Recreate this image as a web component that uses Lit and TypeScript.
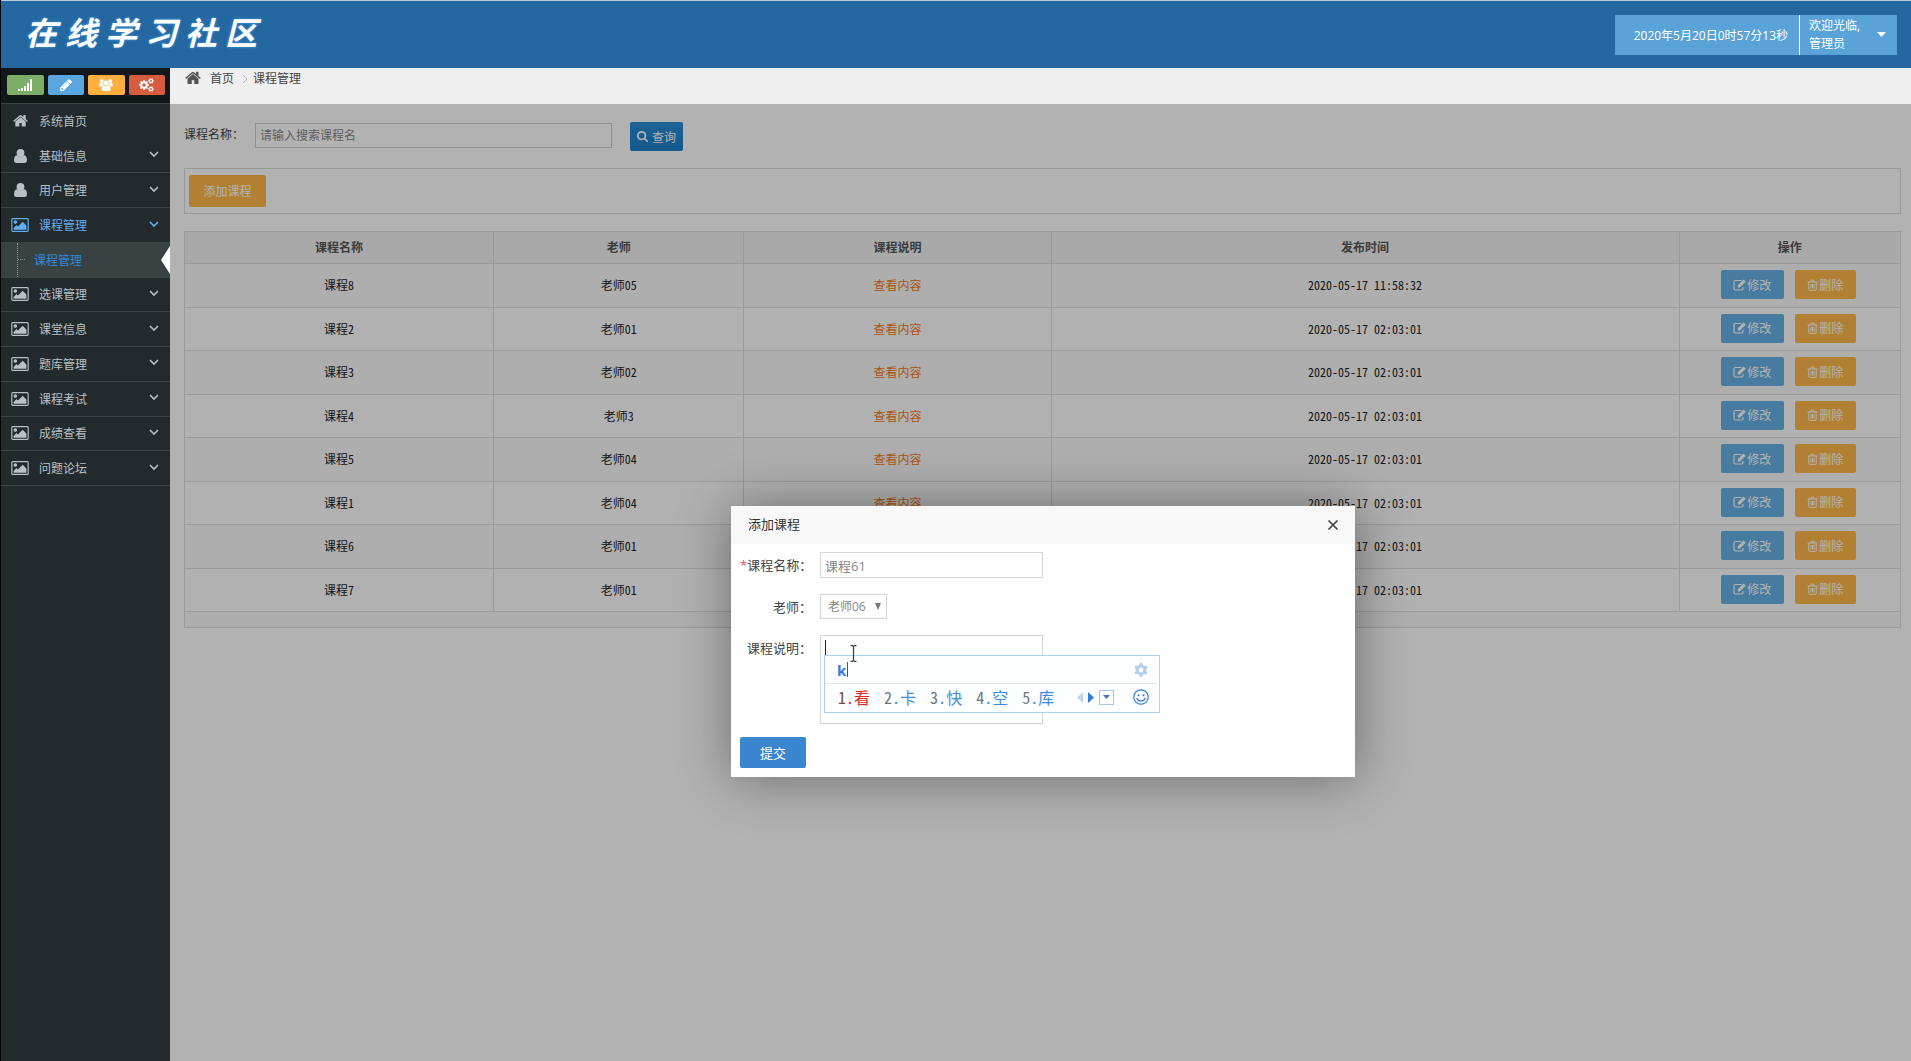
import { LitElement, html, css, svg, nothing } from "lit";
import { customElement, state } from "lit/decorators.js";

type IconName =
  | "home" | "user" | "picture" | "pencil" | "search" | "signal" | "users" | "cogs"
  | "chevron" | "edit" | "trash" | "close" | "gear" | "smile" | "ibeam";

const gearPath = (cx: number, cy: number, r: number, teeth: number, hole = 0.36) => {
  const pts: string[] = [];
  const step = (Math.PI * 2) / teeth;
  for (let i = 0; i < teeth; i++) {
    const a = i * step;
    for (const [off, rad] of [[-0.3, r * 0.76], [-0.17, r], [0.17, r], [0.3, r * 0.76]]) {
      pts.push(`${(cx + Math.cos(a + off * step) * rad).toFixed(2)} ${(cy + Math.sin(a + off * step) * rad).toFixed(2)}`);
    }
  }
  const h = r * hole;
  return `M${pts.join("L")}ZM${cx - h} ${cy}a${h} ${h} 0 1 0 ${h * 2} 0a${h} ${h} 0 1 0 ${-h * 2} 0Z`;
};

const ICONS: Record<IconName, { box: string; body: unknown }> = {
  home: {
    box: "64 192 1664 1344",
    body: svg`<path d="M1472 992v480q0 26-19 45t-45 19h-384v-384h-256v384h-384q-26 0-45-19t-19-45v-480q0-1 .5-3t.5-3l575-474 575 474q1 2 1 6zm223-69l-62 74q-8 9-21 11h-3q-13 0-21-7l-692-577-692 577q-12 8-24 7-13-2-21-11l-62-74q-8-10-7-23.500t11-21.500l719-599q32-26 76-26t76 26l244 204v-195q0-14 9-23t23-9h192q14 0 23 9t9 23v408l219 182q10 8 11 21.500t-7 23.500z"/>`,
  },
  user: {
    box: "0 0 13 14",
    body: svg`<circle cx="6.500" cy="4" r="3.900"/><path d="M2.800 6.300Q6.500 9 10.200 6.300 13 6.800 13 11.600 13 14 10.800 14H2.200Q0 14 0 11.600 0 6.800 2.800 6.300z"/>`,
  },
  picture: {
    box: "-64 128 1920 1536",
    body: svg`<path d="M576 576q0 80-56 136t-136 56-136-56-56-136 56-136 136-56 136 56 56 136zm1024 384v448h-1408v-192l320-320 160 160 512-512zm96-704h-1600q-13 0-22.500 9.500t-9.500 22.500v1216q0 13 9.500 22.500t22.500 9.500h1600q13 0 22.500-9.500t9.500-22.500v-1216q0-13-9.500-22.500t-22.500-9.500zm160 32v1216q0 66-47 113t-113 47h-1600q-66 0-113-47t-47-113v-1216q0-66 47-113t113-47h1600q66 0 113 47t47 113z"/>`,
  },
  pencil: {
    box: "128 128 1536 1536",
    body: svg`<path d="M491 1536l91-91-235-235-91 91v107h128v128h107zm523-928q0-22-22-22-10 0-17 7l-542 542q-7 7-7 17 0 22 22 22 10 0 17-7l542-542q7-7 7-17zm-54-192l416 416-832 832h-416v-416zm683 96q0 53-37 90l-166 166-416-416 166-165q36-38 90-38 53 0 91 38l235 234q37 39 37 91z"/>`,
  },
  search: {
    box: "64 128 1664 1664",
    body: svg`<path d="M1216 832q0-185-131.500-316.500t-316.500-131.500-316.500 131.500-131.500 316.500 131.500 316.500 316.500 131.500 316.500-131.500 131.500-316.500zm512 832q0 52-38 90t-90 38q-54 0-90-38l-343-342q-179 124-399 124-143 0-273.500-55.500t-225-150-150-225-55.500-273.500 55.500-273.500 150-225 225-150 273.500-55.500 273.500 55.500 225 150 150 225 55.500 273.500q0 220-124 399l343 343q37 37 37 90z"/>`,
  },
  signal: {
    box: "0 0 14 12",
    body: svg`<path d="M0 10h2v2H0zM3 9h2v3H3zM6 7h2v5H6zM9 4h2v8H9zM12 0h2v12h-2z"/>`,
  },
  users: {
    box: "0 0 14 12",
    body: svg`<circle cx="2.800" cy="2" r="1.900"/><circle cx="11.200" cy="2" r="1.900"/><circle cx="7" cy="4" r="2.600"/><path d="M0 6.600q0-2.500 1.400-2.500h2.200q.2 1.600 1 2.300-1.200.1-2 1.100H1Q0 7.400 0 6.600zM14 6.600q0-2.500-1.400-2.500h-2.200q-.2 1.600-1 2.300 1.200.1 2 1.100H13q1-.1 1-.9zM2.500 10.500q0-3.900 2.300-3.900 2.200 1.600 4.400 0 2.300 0 2.300 3.900 0 1.500-1.500 1.500H4q-1.500 0-1.500-1.500z"/>`,
  },
  cogs: {
    box: "0 0 15 14",
    body: svg`<path fill-rule="evenodd" d="${gearPath(5, 7, 5, 8)}"/><path fill-rule="evenodd" d="${gearPath(12, 3, 2.8, 6)}"/><path fill-rule="evenodd" d="${gearPath(12, 11, 2.8, 6)}"/>`,
  },
  chevron: {
    box: "0 0 10 7",
    body: svg`<path d="M1 1l4 4 4-4" fill="none" stroke="currentColor" stroke-width="1.600"/>`,
  },
  edit: {
    box: "0 0 13 12",
    body: svg`<path d="M8.500 1.500H2.500Q1 1.500 1 3v6.500Q1 11 2.500 11H8.500Q10 11 10 9.500V8" fill="none" stroke="currentColor" stroke-width="1.200"/><path d="M4.800 8.500V6.200L10.600.6 12.800 2.800 7 8.500z"/>`,
  },
  trash: {
    box: "0 0 11 12",
    body: svg`<path d="M.5 3h10M3.500 3l.7-1.900h2.600L7.500 3M1.800 3v7.300q0 1.100 1 1.100h5.400q1 0 1-1.100V3M4 5v4.500M5.500 5v4.500M7 5v4.500" fill="none" stroke="currentColor"/>`,
  },
  close: {
    box: "0 0 12 12",
    body: svg`<path d="M1.500 1.500l9 9M10.500 1.500l-9 9" fill="none" stroke="currentColor" stroke-width="1.700"/>`,
  },
  gear: {
    box: "0 0 14 14",
    body: svg`<g transform="rotate(30 7 7)"><path d="${gearPath(7, 7, 7, 6, 0.34)}" fill-rule="evenodd"/></g>`,
  },
  smile: {
    box: "0 0 16 16",
    body: svg`<circle cx="8" cy="8" r="7.200" fill="none" stroke="currentColor" stroke-width="1.200"/><circle cx="5.500" cy="6.200" r="1"/><circle cx="10.500" cy="6.200" r="1"/><path d="M3.800 9q.8 3 4.200 3t4.200-3" fill="none" stroke="currentColor" stroke-width="1.200"/>`,
  },
  ibeam: {
    box: "0 0 7 17",
    body: svg`<path d="M.5.7h2l1 .8 1-.8h2M.5 16.300h2l1-.8 1 .8h2M3.500 1.500v14" fill="none" stroke="currentColor" stroke-width="1.300"/>`,
  },
};

const icon = (name: IconName, cls = "") => html`
  <svg class="icon ${cls || name}" viewBox=${ICONS[name].box} fill="currentColor" aria-hidden="true">${ICONS[name].body}</svg>`;

interface MenuItem { label: string; icon: IconName; plain?: boolean; open?: boolean; child?: boolean }

const MENU: MenuItem[] = [
  { label: "系统首页", icon: "home", plain: true },
  { label: "基础信息", icon: "user" },
  { label: "用户管理", icon: "user" },
  { label: "课程管理", icon: "picture", open: true },
  { label: "课程管理", icon: "picture", child: true },
  { label: "选课管理", icon: "picture" },
  { label: "课堂信息", icon: "picture" },
  { label: "题库管理", icon: "picture" },
  { label: "课程考试", icon: "picture" },
  { label: "成绩查看", icon: "picture" },
  { label: "问题论坛", icon: "picture" },
];

const COURSES: [string, string, string][] = [
  ["课程8", "老师05", "2020-05-17 11:58:32"],
  ["课程2", "老师01", "2020-05-17 02:03:01"],
  ["课程3", "老师02", "2020-05-17 02:03:01"],
  ["课程4", "老师3", "2020-05-17 02:03:01"],
  ["课程5", "老师04", "2020-05-17 02:03:01"],
  ["课程1", "老师04", "2020-05-17 02:03:01"],
  ["课程6", "老师01", "2020-05-17 02:03:01"],
  ["课程7", "老师01", "2020-05-17 02:03:01"],
];

const CANDIDATES = ["看", "卡", "快", "空", "库"];

const base = css`
  * { box-sizing: border-box; }
  button, input, select, textarea { font: inherit; color: inherit; margin: 0; border-radius: 0; }
  button { border: 0; padding: 0; cursor: pointer; }
  a { color: inherit; text-decoration: none; }
  .icon { display: block; flex: none; }
`;

@customElement("side-menu")
class SideMenu extends LitElement {
  static styles = [base, css`
    :host { display: block; background: #222a2d; color: #b9c0c6; }
    .shortcuts { display: flex; gap: 4px; height: 36px; padding: 7px 5px 8px 6px; background: #12181a; border-bottom: 1px solid #3a4346; }
    .shortcut { flex: 1; display: flex; align-items: center; justify-content: center; border-radius: 2px; color: #fff; }
    .green { background: #7cae68; }
    .blue { background: #5aa6de; }
    .orange { background: #ffb03e; }
    .red { background: #d75b3f; }
    .signal, .users { width: 14px; height: 12px; }
    .pencil { width: 12px; height: 12px; }
    .cogs { width: 15px; height: 14px; }
    .menu { display: grid; grid-auto-rows: 1fr; min-height: 382px; margin: 0; padding: 0; list-style: none; }
    .item { border-bottom: 1px solid #3b4447; }
    .item.plain { border-color: transparent; }
    .link { display: flex; align-items: center; height: 100%; padding: 0 11px 0 8px; }
    .slot { display: flex; justify-content: center; width: 22px; margin-right: 8px; }
    .text { flex: 1; }
    .home { width: 15px; height: 13px; }
    .user { width: 13px; height: 14px; }
    .picture { width: 18px; height: 14px; }
    .chevron { width: 10px; height: 7px; margin-bottom: 2px; }
    .open { color: #62aef0; }
    .child { display: flex; align-items: stretch; background: #384243; color: #3189d8; }
    .child .link { flex: 1; padding: 0 0 0 5px; }
    .branch { width: 12px; margin-left: 16px; border-left: 1px dotted #8b979a; display: flex; align-items: center; }
    .branch::before { content: ""; width: 7px; border-top: 1px dotted #8b979a; }
    .pointer { align-self: center; border: 14px solid transparent; border-left: 0; border-right: 9px solid #fff; }
  `];

  render() {
    return html`
      <div class="shortcuts">
        <button class="shortcut green" aria-label="统计">${icon("signal")}</button>
        <button class="shortcut blue" aria-label="编辑">${icon("pencil")}</button>
        <button class="shortcut orange" aria-label="用户">${icon("users")}</button>
        <button class="shortcut red" aria-label="设置">${icon("cogs")}</button>
      </div>
      <ul class="menu">
        ${MENU.map((m) => m.child
          ? html`<li class="item child"><span class="branch"></span><a class="link" href="#">${m.label}</a><span class="pointer"></span></li>`
          : html`<li class="item ${m.open ? "open" : ""} ${m.plain ? "plain" : ""}">
              <a class="link" href="#"><span class="slot">${icon(m.icon)}</span><span class="text">${m.label}</span>${m.plain ? nothing : icon("chevron")}</a>
            </li>`)}
      </ul>`;
  }
}

@customElement("course-list")
class CourseList extends LitElement {
  static styles = [base, css`
    :host { display: block; padding: 18px 10px 0 14px; color: #444; }
    .search { display: flex; align-items: flex-start; height: 29px; margin-bottom: 17px; }
    .label { width: 71px; line-height: 26px; }
    .keyword { width: 357px; height: 25px; margin: 1px 18px 0 0; padding: 0 4px; border: 1px solid #d0d0d0; background: #fff; }
    .keyword::placeholder { color: #888; opacity: 1; }
    .query { display: flex; align-items: center; justify-content: center; gap: 4px; width: 53px; height: 29px; border-radius: 2px; color: #fff; background: linear-gradient(#2a8fd8, #1c7cc8); }
    .search-icon { width: 11px; height: 11px; }
    .bar { padding: 6px 4px; margin-bottom: 17px; border: 1px solid #dcdcdc; }
    .add { display: block; width: 77px; height: 32px; border-radius: 2px; background: #ffb848; color: #fff; }
    .table { width: 100%; table-layout: fixed; border-collapse: collapse; border: 1px solid #ddd; color: #222; font-family: "Noto Sans Mono CJK SC", "Noto Sans CJK SC", monospace; text-align: center; }
    .c1 { width: 18%; } .c2 { width: 14.6%; } .c3 { width: 17.9%; } .c4 { width: 36.6%; } .c5 { width: 12.9%; }
    th { height: 32px; padding: 0 0 2px; background: #f3f3f3; color: #555; border: 1px solid #ddd; font: bold 12px "Open Sans", "Noto Sans CJK SC", sans-serif; }
    td { padding: 0; border: 1px solid #ddd; }
    .row td { height: 44px; padding-bottom: 2px; }
    .row:nth-child(even) td { height: 43px; }
    .row:nth-child(odd) { background: #fafafa; }
    .row:nth-child(even) { background: #fefefe; }
    .foot td { height: 16px; background: #fafafa; }
    .view { color: #f47a20; }
    .actions { display: flex; justify-content: center; gap: 11px; padding-right: 3px; font-family: "Open Sans", "Noto Sans CJK SC", sans-serif; }
    .action { display: flex; align-items: center; justify-content: center; gap: 1px; height: 29px; border-radius: 2px; color: #fff; }
    .modify { width: 63px; background: #66b0e6; }
    .remove { width: 61px; background: #ffb848; }
    .edit { width: 13px; height: 12px; }
    .trash { width: 11px; height: 12px; }
  `];

  render() {
    return html`
      <form class="search" @submit=${(e: Event) => e.preventDefault()}>
        <label class="label" for="keyword">课程名称：</label>
        <input class="keyword" id="keyword" type="text" placeholder="请输入搜索课程名">
        <button class="query">${icon("search", "search-icon")}查询</button>
      </form>
      <div class="bar"><button class="add">添加课程</button></div>
      <table class="table">
        <colgroup><col class="c1"><col class="c2"><col class="c3"><col class="c4"><col class="c5"></colgroup>
        <thead><tr><th>课程名称</th><th>老师</th><th>课程说明</th><th>发布时间</th><th>操作</th></tr></thead>
        <tbody>
          ${COURSES.map(([name, teacher, time]) => html`
            <tr class="row">
              <td>${name}</td><td>${teacher}</td><td><a class="view" href="#">查看内容</a></td><td>${time}</td>
              <td><div class="actions">
                <button class="action modify">${icon("edit")}修改</button>
                <button class="action remove">${icon("trash")}删除</button>
              </div></td>
            </tr>`)}
        </tbody>
        <tfoot><tr class="foot"><td colspan="5"></td></tr></tfoot>
      </table>`;
  }
}

@customElement("course-dialog")
class CourseDialog extends LitElement {
  static styles = [base, css`
    :host { display: block; width: 624px; background: #fff; color: #444; font-size: 13px; box-shadow: 1px 1px 50px rgba(0, 0, 0, 0.4); }
    .head { display: flex; align-items: center; justify-content: space-between; height: 38px; padding: 0 16px 0 17px; background: #f8f8f8; }
    .title { margin: 0 0 3px; font-size: 13px; font-weight: normal; color: #333; }
    .x { background: none; color: #444; }
    .close { width: 12px; height: 12px; }
    .form { display: grid; grid-template-columns: 72px 223px; column-gap: 8px; row-gap: 16px; padding: 8px 9px 9px; }
    .label { height: 25px; text-align: right; line-height: 27px; white-space: nowrap; }
    .star { color: #f04a6a; }
    .control { display: block; width: 100%; height: 26px; padding: 0 4px; border: 1px solid #d5d5d5; background: #fff; color: #858585; outline: 0; }
    .picker { display: grid; width: 67px; height: 25px; align-items: center; }
    .picker > * { grid-area: 1 / 1; }
    .picker .control { height: 25px; padding-left: 7px; appearance: none; font-size: 12px; }
    .arrow { justify-self: end; width: 6px; height: 7px; margin-right: 6px; color: #777; pointer-events: none; }
    .field { position: relative; height: 89px; }
    .area { height: 89px; padding: 4px; resize: none; }
    .caret { position: absolute; left: 5px; top: 5px; width: 1px; height: 15px; background: #222; }
    .ibeam { position: absolute; left: 30px; top: 10px; width: 7px; height: 17px; color: #444; z-index: 2; }
    .submit { grid-column: 1 / -1; width: 66px; height: 31px; margin-top: -3px; border-radius: 2px; background: #3a87cf; color: #fff; }
    .ime { position: absolute; left: 4px; top: 20px; z-index: 1; width: 336px; background: #fdfeff; border: 1px solid #a9d3f5; color: #3579d8; }
    .ime-top { display: flex; align-items: center; height: 28px; margin-right: 2px; padding: 0 9px 0 12px; border-bottom: 1px solid #e3e8ec; }
    .typed { display: flex; align-items: center; gap: 1px; flex: 1; font: bold 15px "Open Sans", sans-serif; line-height: 20px; }
    .typed::after { content: ""; width: 1px; height: 15px; background: #555; }
    .gear { width: 14px; height: 14px; color: #b7cfe6; }
    .ime-list { display: flex; align-items: center; height: 28px; padding: 0 10px 2px 13px; font: 16px "Noto Sans Mono CJK SC", "Noto Sans CJK SC", monospace; line-height: 20px; }
    .cand { margin-right: 14px; color: #3c8ce4; background: none; font: inherit; }
    .num { color: #6b7680; }
    .cand.first { color: #e2281c; }
    .first .num { color: #7a4a40; }
    .pager { display: flex; align-items: center; gap: 5px; margin: 0 auto 0 9px; }
    .tri { width: 6px; height: 11px; }
    .pale { color: #bdd2ea; }
    .more { display: flex; align-items: center; justify-content: center; width: 15px; height: 15px; border: 1px solid #a8c6e8; background: #fff; color: #3c76bd; }
    .down { width: 7px; height: 4px; }
    .smile { width: 16px; height: 16px; }
  `];

  @state() private name = "课程61";

  render() {
    return html`
      <div class="head"><h2 class="title">添加课程</h2><button class="x" aria-label="关闭">${icon("close")}</button></div>
      <form class="form" @submit=${(e: Event) => e.preventDefault()}>
        <label class="label" for="name"><span class="star">*</span>课程名称：</label>
        <input class="control" id="name" type="text" .value=${this.name}>
        <label class="label" for="teacher">老师：</label>
        <div class="picker">
          <select class="control" id="teacher"><option>老师06</option></select>
          <svg class="icon arrow" viewBox="0 0 6 7" fill="currentColor" aria-hidden="true"><path d="M0 0h6L3 7z"/></svg>
        </div>
        <label class="label" for="about">课程说明：</label>
        <div class="field">
          <textarea class="control area" id="about"></textarea>
          <span class="caret"></span>
          ${icon("ibeam")}
          <div class="ime">
            <div class="ime-top"><span class="typed">k</span>${icon("gear")}</div>
            <div class="ime-list">
              ${CANDIDATES.map((c, i) => html`<button type="button" class="cand ${i === 0 ? "first" : ""}"><span class="num">${i + 1}</span>.${c}</button>`)}
              <span class="pager">
                <svg class="icon tri pale" viewBox="0 0 6 11" fill="currentColor"><path d="M6 0v11L0 5.500z"/></svg>
                <svg class="icon tri" viewBox="0 0 6 11" fill="currentColor"><path d="M0 0v11l6-5.500z"/></svg>
                <button type="button" class="more" aria-label="更多"><svg class="icon down" viewBox="0 0 7 4" fill="currentColor"><path d="M0 0h7L3.500 4z"/></svg></button>
              </span>
              ${icon("smile")}
            </div>
          </div>
        </div>
        <button class="submit">提交</button>
      </form>`;
  }
}

@customElement("app-root")
class AppRoot extends LitElement {
  static styles = [base, css`
    :host { display: flex; flex-direction: column; min-height: 100vh; border-left: 1px solid #000; box-sizing: border-box; background: #fff; font: 12px "Open Sans", "Noto Sans CJK SC", sans-serif; }
    .header { display: flex; align-items: center; justify-content: space-between; height: 68px; padding: 0 14px 0 24px; border-top: 1px solid #b9cddd; background: #2467a1; color: #fff; }
    .logo { display: flex; gap: 8px; margin: 0 0 8px; font: italic bold 32px "Noto Sans CJK SC", sans-serif; line-height: 44px; text-shadow: 0 0 3px #4aa0e8; }
    .account { display: flex; height: 40px; background: #5aa3d8; }
    .clock { display: flex; align-items: center; padding: 0 11px 0 19px; border-right: 1px solid #fff; }
    .profile { display: flex; align-items: center; justify-content: space-between; width: 97px; padding: 0 11px 0 9px; background: none; color: #fff; text-align: left; line-height: 18px; }
    .caret { width: 9px; height: 5px; }
    .layout { flex: 1; display: grid; grid-template-columns: 169px 1fr; }
    .main { display: flex; flex-direction: column; }
    .crumbs { display: flex; align-items: flex-start; height: 36px; padding: 0 15px; background: #f0eff0; color: #444; line-height: 21px; }
    .home { width: 16px; height: 13px; margin: 3px 9px 0 0; color: #555; }
    .sep { width: 6px; height: 8px; margin: 7px 5px 0 8px; color: #bbb; }
    .content { flex: 1; position: relative; }
    .shade { position: absolute; inset: 0; display: flex; justify-content: center; align-items: flex-start; padding: 402px 0 0 5px; background: rgba(0, 0, 0, 0.3); overflow: hidden; }
  `];

  render() {
    return html`
      <header class="header">
        <h1 class="logo">${[..."在线学习社区"].map((c) => html`<span>${c}</span>`)}</h1>
        <div class="account">
          <span class="clock">2020年5月20日0时57分13秒</span>
          <button class="profile"><span>欢迎光临,<br>管理员</span>
            <svg class="icon caret" viewBox="0 0 9 5" fill="currentColor" aria-hidden="true"><path d="M0 0h9L4.500 5z"/></svg></button>
        </div>
      </header>
      <div class="layout">
        <side-menu></side-menu>
        <main class="main">
          <nav class="crumbs">${icon("home")}<a href="#">首页</a>
            <svg class="icon sep" viewBox="0 0 6 8" aria-hidden="true"><path d="M1 0l4 4-4 4" fill="none" stroke="currentColor"/></svg>
            <span>课程管理</span></nav>
          <div class="content">
            <course-list></course-list>
            <div class="shade"><course-dialog role="dialog"></course-dialog></div>
          </div>
        </main>
      </div>`;
  }
}
